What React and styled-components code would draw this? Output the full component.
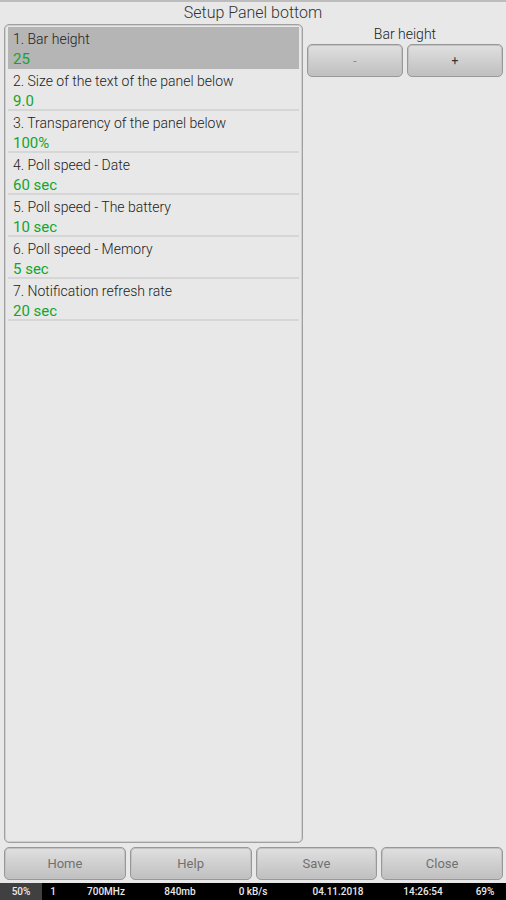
import React ,{useState} from 'react';
import styled, {createGlobalStyle} from 'styled-components';

const startSettings = [
    {name: 'Bar height' , value: 25 , step: 1},
    {name: 'Size of the text of the panel below' , value: 9 , step: 0.5 , digits: 1},
    {name: 'Transparency of the panel below' , value: 100 , step: 5 , unit: '%'},
    {name: 'Poll speed - Date' , value: 60 , step: 5 , unit: ' sec'},
    {name: 'Poll speed - The battery' , value: 10 , step: 1 , unit: ' sec'},
    {name: 'Poll speed - Memory' , value: 5 , step: 1 , unit: ' sec'},
    {name: 'Notification refresh rate' , value: 20 , step: 1 , unit: ' sec'}
];

const status = ['50%' , '1' , '700MHz' , '840mb' , '0 kB/s' , '04.11.2018' , '14:26:54' , '69%'];

const App = () => {
    const [settings , setSettings] = useState(startSettings);
    const [selected , setSelected] = useState(0);
    const change = (sign) => {
        setSettings(settings.map((s , i) => (
            i === selected ? {...s , value: Math.max(0 , s.value + sign * s.step)} : s
        )));
    };
    return (
        <Screen>
            <GlobalStyle/>
            <Title>Setup Panel bottom</Title>
            <Main>
                <List>
                    {settings.map((s , i) => (
                        <li key={s.name}>
                            <Row type="button" $active={i === selected} aria-pressed={i === selected} onClick={() => setSelected(i)}>
                                <Name>{i + 1}. {s.name}</Name>
                                <Value>{s.value.toFixed(s.digits || 0)}{s.unit}</Value>
                            </Row>
                        </li>
                    ))}
                </List>
                <Editor>
                    <EditorTitle>{settings[selected].name}</EditorTitle>
                    <Buttons>
                        <Button type="button" $color="#8c8c8c" $size={12} aria-label="Decrease" onClick={() => change(-1)}>-</Button>
                        <Button type="button" $color="#333" $size={12} aria-label="Increase" onClick={() => change(1)}>+</Button>
                    </Buttons>
                </Editor>
            </Main>
            <Footer>
                <Button type="button">Home</Button>
                <Button type="button">Help</Button>
                <Button type="button">Save</Button>
                <Button type="button">Close</Button>
            </Footer>
            <StatusBar>
                {status.map((text) => <StatusItem key={text}>{text}</StatusItem>)}
            </StatusBar>
        </Screen>
    );
};

export default App;

const GlobalStyle = createGlobalStyle`
* {
    box-sizing: border-box;
}
body {
    margin: 0;
    background: #e8e8e8;
    font-family: Roboto, "Liberation Sans", sans-serif;
}
`;
const Screen = styled.div`
display: flex;
flex-direction: column;
min-height: 100vh;
border-top: 2px solid #bcbcbc;
background: #e8e8e8;
`;
const Title = styled.h1`
margin: 0;
color: #333;
font-size: 16px;
font-weight: 300;
line-height: 22px;
text-align: center;
`;
const Main = styled.main`
flex: 1;
display: grid;
grid-template-columns: 61fr 40fr;
gap: 4px;
padding: 0 3px 0 4px;
`;
const List = styled.ul`
margin: 0;
padding: 2px 3px;
list-style: none;
border: 1px solid #a0a0a0;
border-radius: 5px;
box-shadow: inset 0 0 0 1px #cfcfcf;
`;
const Row = styled.button`
display: flex;
flex-direction: column;
width: 100%;
height: 42px;
padding: 2px 5px 0;
border: 0;
border-bottom: 2px solid ${({$active}) => ($active ? '#b5b5b5' : '#d6d6d6')};
background: ${({$active}) => ($active ? '#b5b5b5' : 'transparent')};
font-family: inherit;
text-align: left;
cursor: pointer;
`;
const Name = styled.span`
color: #222;
font-size: 14px;
font-weight: 300;
line-height: 20px;
`;
const Value = styled.span`
color: #12a52c;
font-size: 15px;
line-height: 20px;
`;
const Editor = styled.section`
display: flex;
flex-direction: column;
`;
const EditorTitle = styled.h2`
margin: 0;
color: #222;
font-size: 14px;
font-weight: 300;
line-height: 20px;
text-align: center;
`;
const Buttons = styled.div`
display: grid;
grid-template-columns: 1fr 1fr;
gap: 4px;
`;
const Button = styled.button`
height: 33px;
padding: 0;
border: 1px solid #989898;
border-radius: 5px;
background: linear-gradient(#e0e0e0, #bfbfbf);
box-shadow: inset 0 0 0 1px #c2c2c2;
color: ${({$color}) => $color || '#707070'};
font-family: inherit;
font-size: ${({$size}) => $size || 13}px;
cursor: pointer;
`;
const Footer = styled.nav`
display: grid;
grid-template-columns: repeat(4, 1fr);
gap: 4px;
padding: 4px 3px 3px 4px;
`;
const StatusBar = styled.footer`
display: grid;
grid-template-columns: 42fr 22fr 84fr 64fr 82fr 88fr 82fr 42fr;
background: #000;
`;
const StatusItem = styled.span`
color: #e8e8e8;
font-size: 10px;
font-weight: 500;
line-height: 17px;
text-align: center;
&:first-child {
    background: #404040;
}
`;
